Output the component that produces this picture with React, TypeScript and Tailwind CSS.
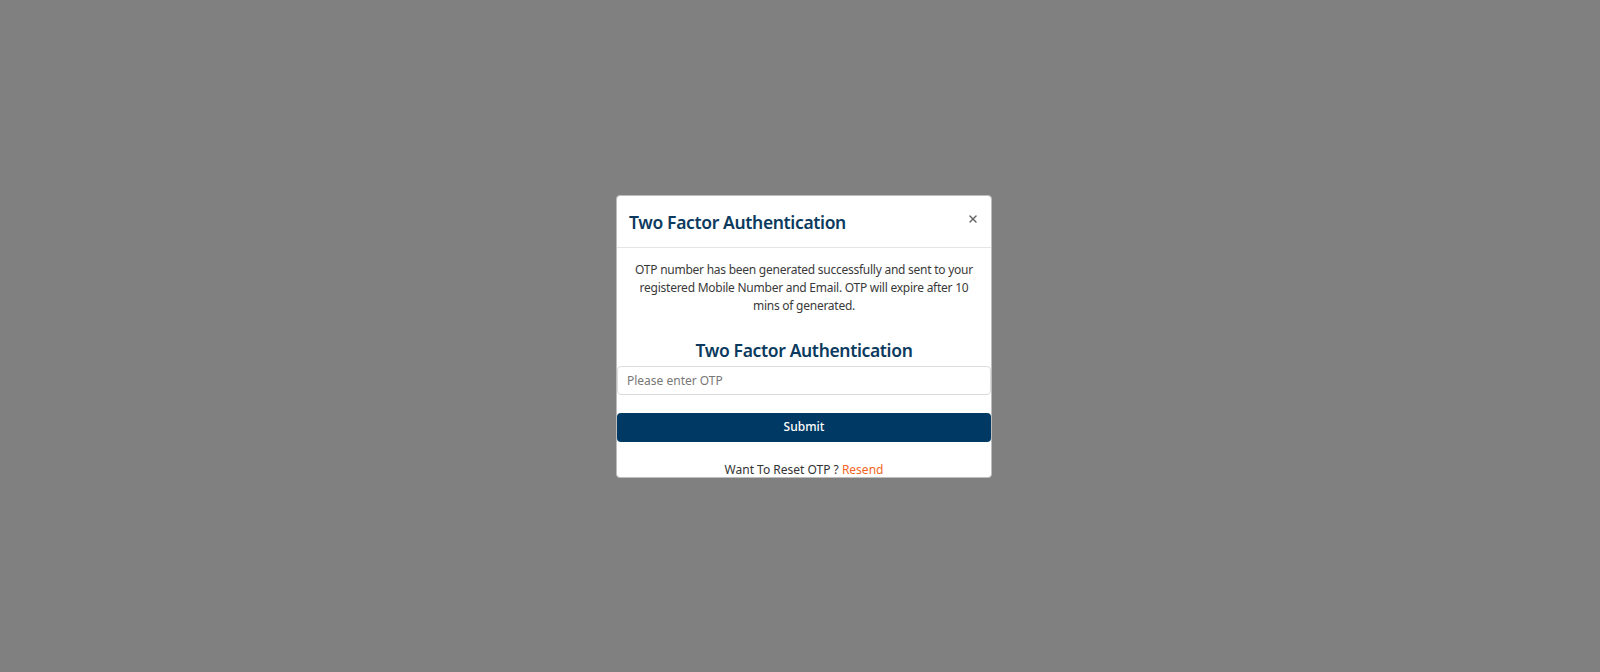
import { X } from 'lucide-react';

const font = { fontFamily: '"Noto Sans", "Open Sans", Arial, sans-serif' };

export default function App() {
  return (
    <div className="w-full h-[672px] bg-[#808080] flex items-center justify-center pl-2">
      <div className="w-[376px] bg-white rounded border border-[#bdbdbd] flex flex-col" style={font}>
        {/* Header */}
        <div className="h-[52px] pl-[12px] pr-[12px] flex items-center justify-between border-b border-[#e5e5e5]">
          <h4 className="text-[17.5px] font-semibold text-[#0b3a5e] tracking-[-0.35px] leading-none mt-[3px]">Two Factor Authentication</h4>
          <button className="text-[#666] -mt-1">
            <X className="w-[12px] h-[12px]" strokeWidth={3} />
          </button>
        </div>

        {/* Body */}
        <div className="flex flex-col">
          <p className="px-[11px] pt-[13px] text-[12px] leading-[18px] text-[#3a3a3a] text-center tracking-[-0.25px]">
            OTP number has been generated successfully and sent to your registered Mobile Number and Email. OTP will expire after 10 mins of generated.
          </p>
          <h3 className="mt-[22px] text-[17.5px] font-semibold text-[#0b3a5e] text-center leading-[26px] tracking-[-0.35px]">Two Factor Authentication</h3>
          <input
            type="text"
            placeholder="Please enter OTP"
            className="mt-[3px] h-[29px] w-full px-[9px] border border-[#dcdcdc] rounded text-[12px] text-[#333] placeholder:text-[#777] outline-none"
          />
          <button className="mt-[18px] h-[29px] w-full rounded bg-[#003963] text-white text-[12px] font-medium">Submit</button>
          <p className="mt-[21px] text-center text-[12px] leading-[14px] text-[#333]">
            Want To Reset OTP ? <a className="text-[#f26522] cursor-pointer">Resend</a>
          </p>
        </div>
      </div>
    </div>
  );
}
